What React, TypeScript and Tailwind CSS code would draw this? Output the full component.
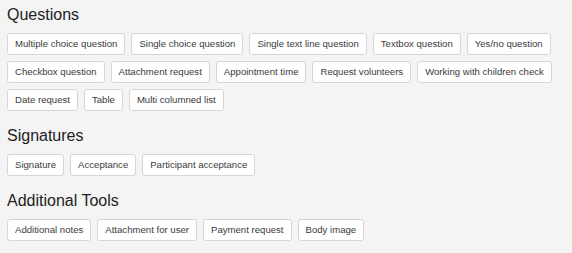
import React from 'react';

const sections: { title: string; items: string[] }[] = [
  {
    title: 'Questions',
    items: [
      'Multiple choice question',
      'Single choice question',
      'Single text line question',
      'Textbox question',
      'Yes/no question',
      'Checkbox question',
      'Attachment request',
      'Appointment time',
      'Request volunteers',
      'Working with children check',
      'Date request',
      'Table',
      'Multi columned list',
    ],
  },
  {
    title: 'Signatures',
    items: ['Signature', 'Acceptance', 'Participant acceptance'],
  },
  {
    title: 'Additional Tools',
    items: ['Additional notes', 'Attachment for user', 'Payment request', 'Body image'],
  },
];

export default function App() {
  return (
    <div
      className="w-[572px] h-[253px] bg-[#f4f4f4] px-[7px] pt-[6px] flex flex-col gap-4 overflow-hidden"
      style={{ fontFamily: '"Liberation Sans", Arial, sans-serif' }}
    >
      {sections.map((section) => (
        <div key={section.title}>
          <h2 className="text-[16px] leading-[18px] text-[#222] mb-[9px]">{section.title}</h2>
          <div className="flex flex-wrap gap-[6px]">
            {section.items.map((item) => (
              <button
                key={item}
                className="h-[22px] px-[7px] flex items-center bg-white border border-[#d6d6d6] rounded-[3px] text-[9.6px] text-[#3a3a3a] whitespace-nowrap"
              >
                {item}
              </button>
            ))}
          </div>
        </div>
      ))}
    </div>
  );
}
